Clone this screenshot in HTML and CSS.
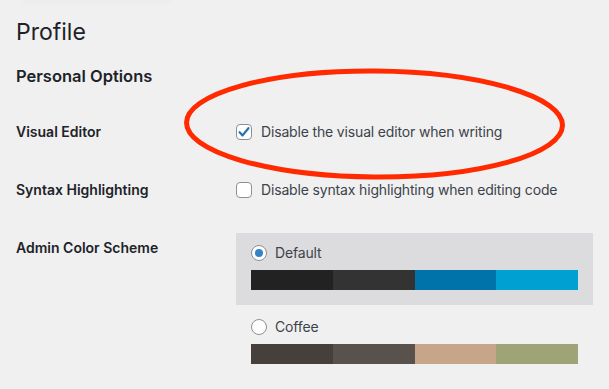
FILE: index.html
```html
<!DOCTYPE html>
<html lang="en">
<head>
<meta charset="utf-8">
<title>Profile</title>
<link rel="stylesheet" href="styles.css">
</head>
<body>
<div class="topshade"></div>
<div class="wrap">
  <h1 class="title">Profile</h1>
  <h2 class="section">Personal Options</h2>
  <div class="form">
    <div class="row row-visual">
      <div class="th">Visual Editor</div>
      <div class="td">
        <label class="check">
          <span class="box checked"><svg width="14" height="14" viewBox="0 0 14 14"><path d="M2.6 7.2 L5.6 10.4 L11.4 3.2" fill="none" stroke="#2271b1" stroke-width="2.2" stroke-linecap="round" stroke-linejoin="round"/></svg></span>
          <span class="ctext">Disable the visual editor when writing</span>
        </label>
      </div>
    </div>
    <div class="row row-syntax">
      <div class="th">Syntax Highlighting</div>
      <div class="td">
        <label class="check">
          <span class="box"></span>
          <span class="ctext">Disable syntax highlighting when editing code</span>
        </label>
      </div>
    </div>
    <div class="row row-scheme">
      <div class="th th-scheme">Admin Color Scheme</div>
      <div class="td">
        <div class="scheme selected">
          <label class="radio-line"><span class="radio on"></span><span class="rtext">Default</span></label>
          <div class="palette">
            <span style="background:#222222"></span>
            <span style="background:#333333"></span>
            <span style="background:#0073aa"></span>
            <span style="background:#00a0d2"></span>
          </div>
        </div>
        <div class="scheme">
          <label class="radio-line"><span class="radio"></span><span class="rtext">Coffee</span></label>
          <div class="palette">
            <span style="background:#46403c"></span>
            <span style="background:#59524c"></span>
            <span style="background:#c7a589"></span>
            <span style="background:#9ea476"></span>
          </div>
        </div>
      </div>
    </div>
  </div>
</div>
<svg class="annotation" width="609" height="389" viewBox="0 0 609 389">
  <ellipse cx="374.5" cy="124" rx="188" ry="53" fill="none" stroke="#ff2a00" stroke-width="5" transform="rotate(0.4 374.5 124)"/>
</svg>
</body>
</html>
```
FILE: styles.css
```css
html, body {
  margin: 0;
  padding: 0;
  background: #f0f0f1;
}
body {
  width: 609px;
  height: 389px;
  overflow: hidden;
  position: relative;
  font-family: Inter, "Liberation Sans", Arial, sans-serif;
  color: #1d2327;
}
.topshade {
  margin-left: 22px;
  width: 150px;
  height: 5px;
  background: linear-gradient(to bottom, rgba(0,0,0,0.025), rgba(0,0,0,0));
  border-radius: 0 0 30px 30px;
  filter: blur(1.5px);
}
.wrap {
  padding-left: 16px;
}
.title {
  margin: 12px 0 0 0;
  font-size: 23px;
  font-weight: 400;
  line-height: 30px;
  color: #1d2327;
}
.section {
  margin: 18px 0 0 0;
  font-size: 16.5px;
  font-weight: 600;
  line-height: 22px;
  color: #1d2327;
}
.form {
  margin-top: 16px;
}
.row {
  display: grid;
  grid-template-columns: 220px 357px;
}
.row-visual, .row-syntax {
  height: 58px;
  align-items: center;
}
.th {
  font-size: 14px;
  font-weight: 600;
  line-height: 20px;
  color: #1d2327;
}
.th-scheme {
  margin-top: 19px;
}
.row-scheme .td {
  padding-top: 14px;
}
.check {
  display: flex;
  align-items: center;
  gap: 9px;
}
.box {
  width: 16px;
  height: 16px;
  box-sizing: border-box;
  border: 1px solid #8c8f94;
  border-radius: 4px;
  background: #fff;
  display: flex;
  align-items: center;
  justify-content: center;
}
.ctext, .rtext {
  font-size: 14px;
  line-height: 20px;
  color: #3c434a;
  letter-spacing: -0.16px;
}
.scheme {
  padding: 12px 15px 15px 15px;
}
.scheme + .scheme {
  padding-top: 14px;
}
.scheme.selected {
  background: #dcdcde;
}
.radio-line {
  display: flex;
  align-items: center;
  gap: 8px;
  height: 16px;
}
.radio {
  width: 16px;
  height: 16px;
  box-sizing: border-box;
  border: 1px solid #8c8f94;
  border-radius: 50%;
  background: #fff;
  display: flex;
  align-items: center;
  justify-content: center;
}
.radio.on::after {
  content: "";
  width: 8px;
  height: 8px;
  border-radius: 50%;
  background: #3582c4;
}
.palette {
  display: flex;
  margin-top: 9px;
  height: 20px;
}
.palette span {
  flex: 1;
}
.annotation {
  position: absolute;
  left: 0;
  top: 0;
  pointer-events: none;
}
```
